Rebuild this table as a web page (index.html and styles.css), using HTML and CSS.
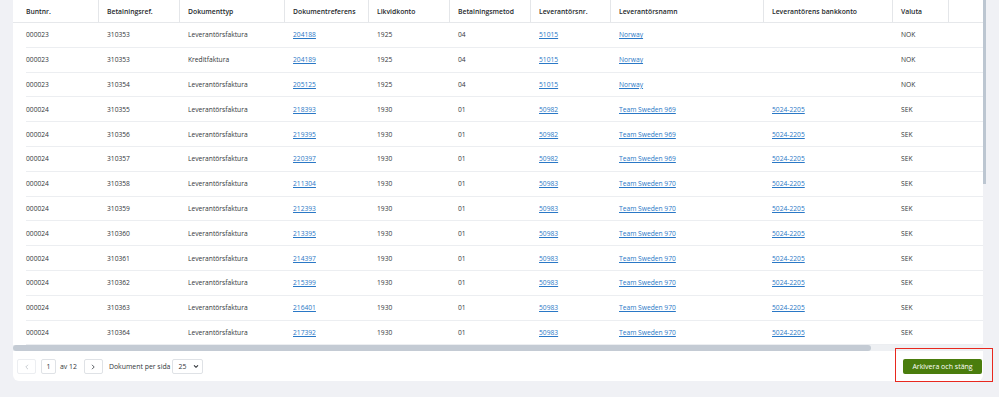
FILE: index.html
```html
<!DOCTYPE html>
<html lang="sv">
<head>
<meta charset="utf-8">
<link rel="stylesheet" href="styles.css">
</head>
<body>
<div class="page">
  <div class="card">
    <div class="table-wrap">
      <div class="thead">
        <div class="th c1">Buntnr.</div>
        <div class="th">Betalningsref.</div>
        <div class="th">Dokumenttyp</div>
        <div class="th">Dokumentreferens</div>
        <div class="th">Likvidkonto</div>
        <div class="th">Betalningsmetod</div>
        <div class="th">Leverantörsnr.</div>
        <div class="th">Leverantörsnamn</div>
        <div class="th">Leverantörens bankkonto</div>
        <div class="th">Valuta</div>
        <div class="th"></div>
      </div>
      <div class="tbody">
        <div class="tr"><div class="td c1">000023</div><div class="td">310353</div><div class="td">Leverantörsfaktura</div><div class="td"><a>204188</a></div><div class="td">1925</div><div class="td">04</div><div class="td"><a>51015</a></div><div class="td"><a>Norway</a></div><div class="td"></div><div class="td">NOK</div><div class="td"></div></div>
        <div class="tr"><div class="td c1">000023</div><div class="td">310353</div><div class="td">Kreditfaktura</div><div class="td"><a>204189</a></div><div class="td">1925</div><div class="td">04</div><div class="td"><a>51015</a></div><div class="td"><a>Norway</a></div><div class="td"></div><div class="td">NOK</div><div class="td"></div></div>
        <div class="tr"><div class="td c1">000023</div><div class="td">310354</div><div class="td">Leverantörsfaktura</div><div class="td"><a>205125</a></div><div class="td">1925</div><div class="td">04</div><div class="td"><a>51015</a></div><div class="td"><a>Norway</a></div><div class="td"></div><div class="td">NOK</div><div class="td"></div></div>
        <div class="tr"><div class="td c1">000024</div><div class="td">310355</div><div class="td">Leverantörsfaktura</div><div class="td"><a>218393</a></div><div class="td">1930</div><div class="td">01</div><div class="td"><a>50982</a></div><div class="td"><a>Team Sweden 969</a></div><div class="td"><a>5024-2205</a></div><div class="td">SEK</div><div class="td"></div></div>
        <div class="tr"><div class="td c1">000024</div><div class="td">310356</div><div class="td">Leverantörsfaktura</div><div class="td"><a>219395</a></div><div class="td">1930</div><div class="td">01</div><div class="td"><a>50982</a></div><div class="td"><a>Team Sweden 969</a></div><div class="td"><a>5024-2205</a></div><div class="td">SEK</div><div class="td"></div></div>
        <div class="tr"><div class="td c1">000024</div><div class="td">310357</div><div class="td">Leverantörsfaktura</div><div class="td"><a>220397</a></div><div class="td">1930</div><div class="td">01</div><div class="td"><a>50982</a></div><div class="td"><a>Team Sweden 969</a></div><div class="td"><a>5024-2205</a></div><div class="td">SEK</div><div class="td"></div></div>
        <div class="tr"><div class="td c1">000024</div><div class="td">310358</div><div class="td">Leverantörsfaktura</div><div class="td"><a>211304</a></div><div class="td">1930</div><div class="td">01</div><div class="td"><a>50983</a></div><div class="td"><a>Team Sweden 970</a></div><div class="td"><a>5024-2205</a></div><div class="td">SEK</div><div class="td"></div></div>
        <div class="tr"><div class="td c1">000024</div><div class="td">310359</div><div class="td">Leverantörsfaktura</div><div class="td"><a>212393</a></div><div class="td">1930</div><div class="td">01</div><div class="td"><a>50983</a></div><div class="td"><a>Team Sweden 970</a></div><div class="td"><a>5024-2205</a></div><div class="td">SEK</div><div class="td"></div></div>
        <div class="tr"><div class="td c1">000024</div><div class="td">310360</div><div class="td">Leverantörsfaktura</div><div class="td"><a>213395</a></div><div class="td">1930</div><div class="td">01</div><div class="td"><a>50983</a></div><div class="td"><a>Team Sweden 970</a></div><div class="td"><a>5024-2205</a></div><div class="td">SEK</div><div class="td"></div></div>
        <div class="tr"><div class="td c1">000024</div><div class="td">310361</div><div class="td">Leverantörsfaktura</div><div class="td"><a>214397</a></div><div class="td">1930</div><div class="td">01</div><div class="td"><a>50983</a></div><div class="td"><a>Team Sweden 970</a></div><div class="td"><a>5024-2205</a></div><div class="td">SEK</div><div class="td"></div></div>
        <div class="tr"><div class="td c1">000024</div><div class="td">310362</div><div class="td">Leverantörsfaktura</div><div class="td"><a>215399</a></div><div class="td">1930</div><div class="td">01</div><div class="td"><a>50983</a></div><div class="td"><a>Team Sweden 970</a></div><div class="td"><a>5024-2205</a></div><div class="td">SEK</div><div class="td"></div></div>
        <div class="tr"><div class="td c1">000024</div><div class="td">310363</div><div class="td">Leverantörsfaktura</div><div class="td"><a>216401</a></div><div class="td">1930</div><div class="td">01</div><div class="td"><a>50983</a></div><div class="td"><a>Team Sweden 970</a></div><div class="td"><a>5024-2205</a></div><div class="td">SEK</div><div class="td"></div></div>
        <div class="tr"><div class="td c1">000024</div><div class="td">310364</div><div class="td">Leverantörsfaktura</div><div class="td"><a>217392</a></div><div class="td">1930</div><div class="td">01</div><div class="td"><a>50983</a></div><div class="td"><a>Team Sweden 970</a></div><div class="td"><a>5024-2205</a></div><div class="td">SEK</div><div class="td"></div></div>
      </div>
      <div class="hscroll"><div class="hthumb"></div></div>
      <div class="vscroll"></div>
    </div>
    <div class="footer">
      <div class="pager">
        <span class="pbtn disabled"><svg width="6" height="6" viewBox="0 0 6 6"><path d="M4 0.8 L1.8 3 L4 5.2" fill="none" stroke="#c4c8cd" stroke-width="0.9"/></svg></span>
        <span class="pnum">1</span>
        <span class="ptext">av 12</span>
        <span class="pbtn next"><svg width="6" height="6" viewBox="0 0 6 6"><path d="M2 0.8 L4.2 3 L2 5.2" fill="none" stroke="#4a4f55" stroke-width="0.9"/></svg></span>
        <span class="plabel">Dokument per sida</span>
        <span class="psel">25<svg width="6" height="5" viewBox="0 0 6 5"><path d="M1 1.3 L3 3.3 L5 1.3" fill="none" stroke="#2a2e33" stroke-width="1.1"/></svg></span>
      </div>
      <button class="primary">Arkivera och stäng</button>
    </div>
  </div>
  <div class="highlight"></div>
</div>
</body>
</html>
```

FILE: styles.css
```css
* { box-sizing: border-box; }
html, body { margin: 0; padding: 0; }
body {
  background: #f0f1f5;
  font-family: "Open Sans", "Noto Sans", sans-serif;
  color: #33363a;
  width: 999px;
  height: 397px;
  overflow: hidden;
}
.page {
  position: relative;
  padding-left: 13px;
  height: 397px;
}
.card {
  width: 970px;
  background: #fff;
  border-radius: 0 0 6px 6px;
}
.table-wrap {
  position: relative;
}
.thead, .tr {
  display: grid;
  grid-template-columns: 85px 81px 105px 84px 81px 81px 80px 153px 129px 56px 35px;
}
.thead {
  height: 23px;
  border-bottom: 1px solid #e6e8eb;
}
.th {
  font-size: 6.8px;
  font-weight: 600;
  color: #26292d;
  padding-left: 8px;
  display: flex;
  align-items: center;
  border-left: 1px solid #e4e6e9;
}
.th.c1 { border-left: none; padding-left: 13px; }
.tr {
  height: 24.8px;
  margin-left: 13px;
  grid-template-columns: 72px 81px 105px 84px 81px 81px 80px 153px 129px 56px 35px;
  border-bottom: 1px solid #eceef1;
}
.td {
  font-size: 6.7px;
  padding-left: 9px;
  display: flex;
  align-items: center;
  white-space: nowrap;
}
.td.c1 { padding-left: 0; }
.td a {
  color: #2a78c6;
  text-decoration: underline;
  text-underline-offset: 1px;
}
.hscroll {
  height: 6px;
  background: #eef0f3;
}
.hthumb {
  width: 858px;
  height: 6px;
  border-radius: 3px;
  background: #c4cbd4;
}
.vscroll {
  position: absolute;
  left: 970px;
  top: 0;
  width: 3px;
  height: 184px;
  background: #bcc6d1;
}
.footer {
  height: 30px;
  display: flex;
  align-items: center;
  justify-content: space-between;
  padding: 1px 1px 0 4px;
}
.pager {
  display: flex;
  align-items: center;
  font-size: 6.9px;
  color: #33363a;
}
.pbtn, .pnum, .psel {
  height: 15px;
  border: 1px solid #dfe2e6;
  border-radius: 2px;
  display: flex;
  align-items: center;
  justify-content: center;
  background: #fff;
}
.pbtn { width: 19px; }
.pbtn.disabled { border-color: #eceef1; }
.pnum { width: 15px; margin-left: 5px; }
.ptext { margin-left: 4px; }
.pbtn.next { margin-left: 7px; }
.plabel { margin-left: 6px; }
.psel {
  width: 31px;
  margin-left: 2px;
  justify-content: flex-start;
  padding-left: 5px;
  gap: 7px;
}
.primary {
  width: 79px;
  height: 15px;
  background: #4a7d0d;
  color: #fff;
  border: none;
  border-radius: 2px;
  font-family: "Open Sans", "Noto Sans", sans-serif;
  font-size: 7px;
  font-weight: 400;
  padding: 0;
}
.highlight {
  position: absolute;
  left: 895px;
  top: 348px;
  width: 98px;
  height: 34px;
  border: 1.5px solid #e8281e;
}
```
